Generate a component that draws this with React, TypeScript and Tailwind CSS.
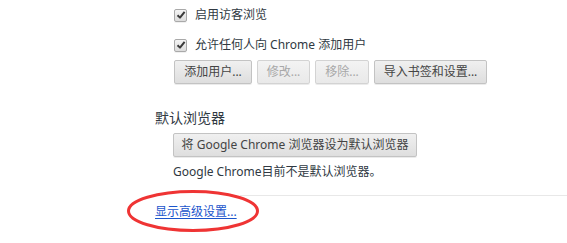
import React from "react"

const font = `"Noto Sans", "Noto Sans CJK SC", sans-serif`

const Checkbox = () => (
  <span className="flex h-[13px] w-[13px] items-center justify-center rounded-[2px] border border-[#a9a9a9] bg-gradient-to-b from-[#f4f4f4] to-[#dcdcdc] shadow-[0_1px_0_rgba(0,0,0,0.06)]">
    <svg width="10" height="10" viewBox="0 0 10 10">
      <path d="M1.5 5.2 L4 7.6 L8.6 1.8" fill="none" stroke="#3a3a3a" strokeWidth="2" strokeLinejoin="round" />
    </svg>
  </span>
)

interface BtnProps {
  text: string
  width: string
  disabled?: boolean
}

const Button = ({ text, width, disabled }: BtnProps) => (
  <button
    className={`h-[24px] ${width} shrink-0 rounded-[2px] border border-[#c3c3c3] bg-gradient-to-b text-[12px] leading-none shadow-[0_1px_0_rgba(0,0,0,0.08)] ${
      disabled ? "from-[#f3f3f3] to-[#e9e9e9] text-[#a8a8a8] border-[#d3d3d3]" : "from-[#f0f0f0] to-[#dedede] text-[#444]"
    }`}
  >
    {text}
  </button>
)

const App = () => {
  return (
    <div
      className="relative h-[243px] w-[567px] overflow-hidden bg-white text-[12px] text-[#303942]"
      style={{ fontFamily: font }}
    >
      <div className="pl-[174px]">
        <div className="flex h-[30px] items-center gap-[8px]">
          <Checkbox />
          <span>启用访客浏览</span>
        </div>
        <div className="flex h-[30px] items-center gap-[8px]">
          <Checkbox />
          <span>允许任何人向 Chrome 添加用户</span>
        </div>
        <div className="flex gap-[5px]">
          <Button text="添加用户..." width="w-[78px]" />
          <Button text="修改..." width="w-[53px]" disabled />
          <Button text="移除..." width="w-[54px]" disabled />
          <Button text="导入书签和设置..." width="w-[113px]" />
        </div>
      </div>

      <div className="mt-[23px] flex h-[20px] items-center pl-[155px] text-[14px]">默认浏览器</div>

      <div className="mt-[6px] pl-[173px]">
        <Button text="将 Google Chrome 浏览器设为默认浏览器" width="w-[244px]" />
      </div>
      <div className="mt-[7px] flex h-[16px] items-center pl-[173px]">Google Chrome目前不是默认浏览器。</div>

      <div className="mt-[15px] ml-[240px] h-px bg-[#e8e8e8]" />

      <div className="mt-[8px] flex h-[16px] items-center pl-[155px]">
        <a href="#" className="text-[#1a55cc] underline underline-offset-2">
          显示高级设置...
        </a>
      </div>

      <svg className="absolute left-[126px] top-[189px]" width="134" height="44" viewBox="0 0 134 44">
        <ellipse cx="67" cy="22" rx="64.5" ry="19.5" fill="none" stroke="#ef3434" strokeWidth="3" />
      </svg>
    </div>
  )
}

export default App
